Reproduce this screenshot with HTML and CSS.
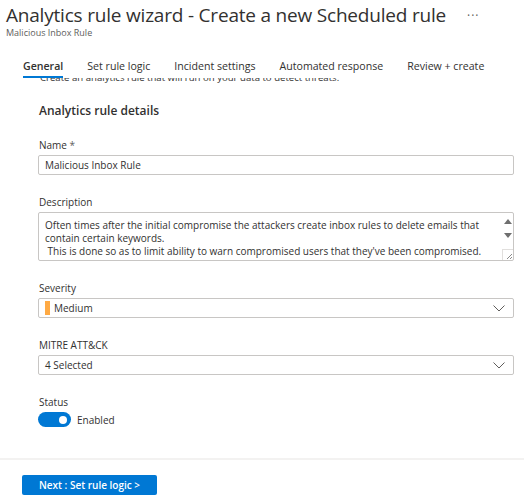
FILE: index.html
```html
<!DOCTYPE html>
<html>
<head>
<meta charset="utf-8">
<link rel="stylesheet" href="styles.css">
</head>
<body>
<div class="page">
  <header class="header">
    <div class="title-row">
      <h1 class="title">Analytics rule wizard - Create a new Scheduled rule</h1>
      <span class="more">···</span>
    </div>
    <div class="subtitle">Malicious Inbox Rule</div>
  </header>
  <nav class="tabs">
    <span class="tab active">General</span>
    <span class="tab">Set rule logic</span>
    <span class="tab">Incident settings</span>
    <span class="tab">Automated response</span>
    <span class="tab">Review + create</span>
  </nav>
  <main class="scroll">
    <p class="intro">Create an analytics rule that will run on your data to detect threats.</p>
    <h2 class="section">Analytics rule details</h2>
    <div class="field">
      <label class="label">Name <span class="req">*</span></label>
      <div class="input">Malicious Inbox Rule</div>
    </div>
    <div class="field">
      <label class="label">Description</label>
      <div class="textarea">
        <div class="ta-text">Often times after the initial compromise the attackers create inbox rules to delete emails that contain certain keywords.<br>&nbsp;This is done so as to limit ability to warn compromised users that they've been compromised.</div>
        <div class="ta-scroll">
          <svg class="arrow" width="8" height="6" viewBox="0 0 8 6"><path d="M0 6 L4 1 L8 6 Z" fill="#6f6f6f"/></svg>
          <svg class="arrow" width="8" height="6" viewBox="0 0 8 6"><path d="M0 0 L4 5 L8 0 Z" fill="#6f6f6f"/></svg>
          <span class="grip"><svg width="8" height="8" viewBox="0 0 8 8"><path d="M7 2 L2 7 M7 5 L5 7" stroke="#8a8a8a" stroke-width="1"/></svg></span>
        </div>
      </div>
    </div>
    <div class="field">
      <label class="label">Severity</label>
      <div class="select">
        <span class="sev-bar"></span>
        <span class="sel-text">Medium</span>
        <svg class="chev" width="12" height="7" viewBox="0 0 12 7"><path d="M0.5 0.5 L6 6 L11.5 0.5" fill="none" stroke="#605e5c" stroke-width="1"/></svg>
      </div>
    </div>
    <div class="field">
      <label class="label">MITRE ATT&amp;CK</label>
      <div class="select">
        <span class="sel-text">4 Selected</span>
        <svg class="chev" width="12" height="7" viewBox="0 0 12 7"><path d="M0.5 0.5 L6 6 L11.5 0.5" fill="none" stroke="#605e5c" stroke-width="1"/></svg>
      </div>
    </div>
    <div class="field">
      <label class="label">Status</label>
      <div class="toggle-row">
        <span class="toggle"><span class="knob"></span></span>
        <span class="toggle-text">Enabled</span>
      </div>
    </div>
  </main>
  <footer class="footer">
    <button class="primary">Next : Set rule logic &gt;</button>
  </footer>
</div>
</body>
</html>
```
FILE: styles.css
```css
* { box-sizing: border-box; }
html, body { margin: 0; padding: 0; background: #fff; }
body {
  font-family: "Open Sans", "Noto Sans", "DejaVu Sans", sans-serif;
  color: #323130;
  width: 524px;
  height: 500px;
  overflow: hidden;
}
.page { display: flex; flex-direction: column; height: 500px; }
.header { padding: 3px 0 0 6px; }
.title-row { display: flex; align-items: center; height: 24px; }
.title {
  margin: 0;
  font-size: 19px;
  font-weight: 400;
  line-height: 24px;
  letter-spacing: -0.2px;
  color: #323130;
  white-space: nowrap;
}
.more { margin-left: 21px; font-size: 12px; color: #605e5c; letter-spacing: 1px; }
.subtitle { font-size: 9px; color: #605e5c; line-height: 12px; margin-top: 0; }
.tabs {
  display: flex;
  gap: 24px;
  padding: 0 0 0 23px;
  margin-top: 19px;
  height: 20px;
}
.tab {
  font-size: 10.6px;
  line-height: 16px;
  color: #323130;
  position: relative;
  height: 20px;
  white-space: nowrap;
}
.tab.active { font-weight: 600; }
.tab.active::after {
  content: "";
  position: absolute;
  left: 0; right: 0; bottom: 0;
  height: 2px;
  background: #0078d4;
}
.scroll {
  flex: 1;
  overflow: hidden;
  padding: 0 10px 0 38px;
  border-bottom: 2px solid #f3f2f1;
}
.intro {
  margin: -7px 0 0 2px;
  font-size: 9.6px;
  line-height: 14px;
  color: #323130;
  white-space: nowrap;
}
.section {
  margin: 17px 0 0 1px;
  font-size: 12px;
  font-weight: 600;
  line-height: 18px;
}
.field { margin-top: 20px; }
.field:first-of-type { margin-top: 18px; }
.label {
  display: block;
  font-size: 10px;
  line-height: 14px;
  margin: 0 0 3px 1px;
  color: #323130;
}
.req { color: #605e5c; }
.input, .select {
  height: 20px;
  border: 1px solid #c8c6c4;
  border-radius: 2px;
  font-size: 10px;
  line-height: 18px;
  padding: 0 6px;
  display: flex;
  align-items: center;
}
.textarea {
  height: 49px;
  border: 1px solid #c8c6c4;
  border-radius: 2px;
  display: flex;
  font-size: 10px;
  line-height: 13px;
}
.ta-text { flex: 1; padding: 6px 6px 0 6px; overflow: hidden; }
.ta-scroll {
  width: 11px;
  display: flex;
  flex-direction: column;
  align-items: center;
  padding-top: 5px;
}
.ta-scroll .arrow + .arrow { margin-top: 9px; }
.grip {
  margin-top: auto;
  width: 11px;
  height: 11px;
  border-top: 1px solid #e1dfdd;
  border-left: 1px solid #e1dfdd;
  display: flex;
  align-items: flex-end;
  justify-content: flex-end;
}
.sev-bar { width: 5px; height: 14px; background: #ffaa44; margin-right: 4px; }
.sel-text { flex: 1; }
.chev { margin-right: 2px; }
.toggle-row { display: flex; align-items: center; gap: 6px; margin-top: 1px; }
.toggle {
  width: 33px;
  height: 15px;
  border-radius: 8px;
  background: #0078d4;
  display: flex;
  align-items: center;
  justify-content: flex-end;
  padding-right: 4px;
}
.knob { width: 8px; height: 8px; border-radius: 50%; background: #fff; }
.toggle-text { font-size: 10px; }
.footer { height: 40px; padding: 12px 0 0 22px; }
.primary {
  width: 135px;
  height: 20px;
  background: #0078d4;
  color: #fff;
  border: none;
  border-radius: 2px;
  font-family: inherit;
  font-size: 10px;
  font-weight: 600;
  padding: 0;
}
```
